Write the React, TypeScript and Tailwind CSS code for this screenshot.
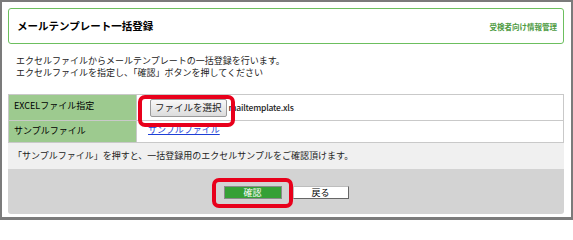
export default function App() {
  return (
    <div
      className="relative w-[573px] h-[220px] bg-white border-t-2 border-l-2 border-r-2 border-b-[3px] border-[#7b7b7b] px-[6px] pt-[6px] text-black overflow-hidden"
      style={{ fontFamily: '"Noto Sans CJK JP", "Noto Sans", sans-serif' }}
    >
      {/* Header */}
      <div className="h-[36px] w-[556px] border border-[#6cbf5e] rounded-[3px] flex items-center justify-between pl-[8px] pr-[6px]">
        <span className="text-[10.5px] font-bold leading-none">メールテンプレート一括登録</span>
        <span className="text-[7.5px] font-semibold leading-none text-[#4e9b43] mt-[2px]">受検者向け情報管理</span>
      </div>

      {/* Description */}
      <div className="mt-[11px] pl-[8px] text-[9px] leading-[11.5px] text-[#222]">
        <p>エクセルファイルからメールテンプレートの一括登録を行います。</p>
        <p>エクセルファイルを指定し、「確認」ボタンを押してください</p>
      </div>

      {/* Form table */}
      <div className="mt-[16px] w-[556px] border border-[#c9c9c9] text-[9px]">
        <div className="flex h-[26px] border-b border-[#c9c9c9]">
          <div className="w-[128px] bg-[#9dca8f] border-r border-[#c9c9c9] pl-[5px] pt-[5px] leading-[12px]">
            EXCELファイル指定
          </div>
          <div className="flex-1 flex items-center pl-[13px] gap-[2px]">
            <button className="h-[18px] px-[4px] border border-[#9a9a9a] rounded-[2px] bg-gradient-to-b from-[#f8f8f8] to-[#dcdcdc] text-[9.5px] leading-none text-[#222]">
              ファイルを選択
            </button>
            <span className="text-[8.5px] font-medium text-[#222] tracking-[-0.2px]">mailtemplate.xls</span>
          </div>
        </div>
        <div className="flex h-[21px]">
          <div className="w-[128px] bg-[#9dca8f] border-r border-[#c9c9c9] pl-[5px] pt-[4px] leading-[12px]">
            サンプルファイル
          </div>
          <div className="flex-1 pl-[11px] pt-[3px] leading-[12px]">
            <a className="text-[#1d3fd6] underline cursor-pointer">サンプルファイル</a>
          </div>
        </div>
      </div>

      {/* Note */}
      <div className="w-[556px] h-[26px] bg-[#f0f0f0] flex items-center pl-[5px] text-[9px] text-[#222]">
        「サンプルファイル」を押すと、一括登録用のエクセルサンプルをご確認頂けます。
      </div>

      {/* Actions */}
      <div className="w-[556px] h-[45px] bg-[#d3d3d3] rounded-b-[3px] flex items-center justify-center gap-[11px] pt-[2px]">
        <button className="w-[58px] h-[13px] bg-[#35a035] border border-[#8a8a8a] text-white text-[9px] leading-none">
          確認
        </button>
        <button className="w-[56px] h-[13px] bg-white border border-[#bdbdbd] border-r-[#666] border-b-[#666] text-[9px] leading-none">
          戻る
        </button>
      </div>

      {/* Highlight overlays */}
      <div className="absolute left-[136px] top-[93px] w-[97px] h-[32px] border-[4px] border-[#e8001b] rounded-[7px] pointer-events-none" />
      <div className="absolute left-[210px] top-[176px] w-[81px] h-[30px] border-[4px] border-[#e8001b] rounded-[7px] pointer-events-none" />
    </div>
  );
}
